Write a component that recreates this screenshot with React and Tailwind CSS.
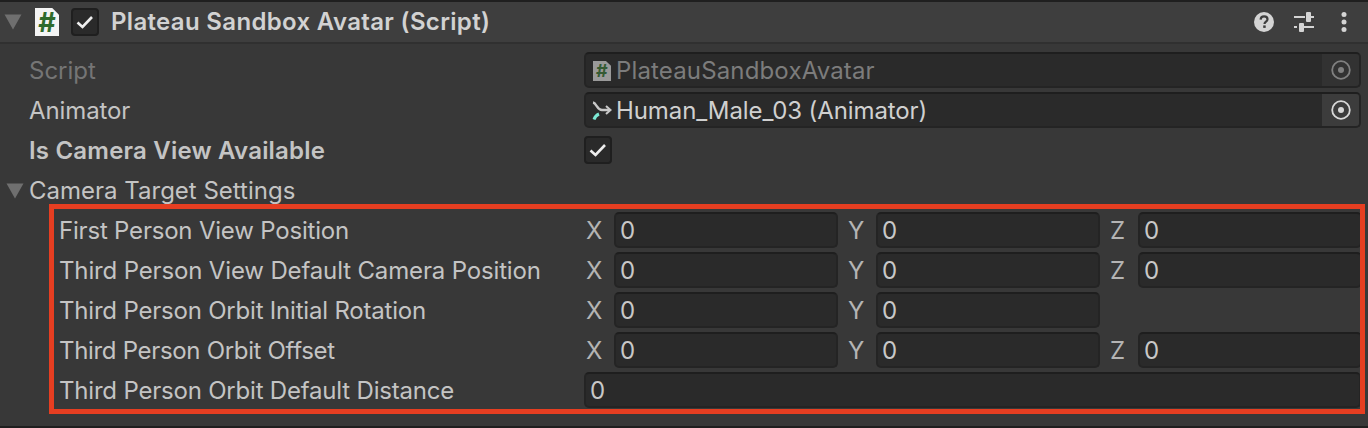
const Triangle = () => (
  <svg width="18" height="16" viewBox="0 0 18 16" className="block">
    <path d="M0.5 0.5H17.5L9 15.5Z" fill="#6f6f6f" />
  </svg>
);

const CheckBox = () => (
  <div className="flex h-[28px] w-[28px] items-center justify-center rounded-[4px] border-2 border-[#1f1f1f] bg-[#2a2a2a]">
    <svg width="20" height="16" viewBox="0 0 20 16" fill="none">
      <path d="M2.5 8.5L7.5 13L17 3" stroke="#eeeeee" strokeWidth="2.6" />
    </svg>
  </div>
);

const ScriptIcon = ({ className, hash }) => (
  <div className={`relative flex items-center justify-center ${className}`} style={{ clipPath: 'polygon(0 0, 72% 0, 100% 24%, 100% 100%, 0 100%)' }}>
    <span className={`font-['Inter',sans-serif] font-bold leading-none ${hash}`}>#</span>
  </div>
);

const Target = ({ disabled }) => (
  <div className={`flex h-full w-[37px] items-center justify-center rounded-r-[3px] ${disabled ? 'bg-[#323232]' : 'bg-[#3c3c3c]'}`}>
    <svg width="20" height="20" viewBox="0 0 20 20" fill="none">
      <circle cx="10" cy="10" r="8.8" stroke={disabled ? '#808080' : '#d8d8d8'} strokeWidth="1.8" />
      <circle cx="10" cy="10" r="3" fill={disabled ? '#808080' : '#d8d8d8'} />
    </svg>
  </div>
);

const Field = ({ className = '', children }) => (
  <div className={`mb-[2px] flex h-[36px] items-center rounded-[5px] border-2 border-[#242424] border-t-[#1e1e1e] bg-[#2a2a2a] ${className}`}>
    {children}
  </div>
);

const NumberField = ({ axis }) => (
  <div className="flex w-[254px] shrink-0 items-center">
    <span className="w-[30px] pl-[2px] text-[#b4b4b4]">{axis}</span>
    <Field className="w-[224px] pl-[4px] pt-[2px] text-[#c8c8c8]">0</Field>
  </div>
);

const Row = ({ label, indent = 'pl-[29px]', labelClass = 'text-[#c4c4c4]', arrow, children }) => (
  <div className="flex h-[40px] items-center">
    <div className={`relative flex w-[584px] shrink-0 items-center ${indent} ${labelClass}`}>
      {arrow && <span className="absolute left-[6px] top-[4px]"><Triangle /></span>}
      {label}
    </div>
    {children}
  </div>
);

const vectorRows = [
  ['First Person View Position', ['X', 'Y', 'Z'], 'tracking-[-0.2px] text-[#c4c4c4]'],
  ['Third Person View Default Camera Position', ['X', 'Y', 'Z'], 'tracking-[-0.15px] text-[#c4c4c4]'],
  ['Third Person Orbit Initial Rotation', ['X', 'Y'], 'tracking-[-0.2px] text-[#c4c4c4]'],
  ['Third Person Orbit Offset', ['X', 'Y', 'Z'], 'tracking-[-0.32px] text-[#c4c4c4]'],
];

export default function App() {
  return (
    <div className="relative flex h-[428px] w-[1368px] flex-col overflow-hidden bg-[#383838] font-['Inter',sans-serif] text-[24px] leading-none">
      <div className="h-[2px] shrink-0 bg-[#1f1f1f]" />

      {/* header */}
      <div className="flex h-[42px] shrink-0 items-center border-b-2 border-[#303030] bg-[#3e3e3e]">
        <span className="ml-[4px]"><Triangle /></span>
        <ScriptIcon className="ml-[13px] h-[28px] w-[24px] bg-[#f4f4f4]" hash="text-[27px] text-[#2f6b2c]" />
        <span className="ml-[12px]"><CheckBox /></span>
        <span className="ml-[12px] font-semibold tracking-[0.33px] text-[#d2d2d2]">Plateau Sandbox Avatar (Script)</span>
        <div className="ml-auto mr-[21px] flex items-center">
          <svg width="20" height="20" viewBox="0 0 20 20">
            <circle cx="10" cy="10" r="10" fill="#d4d4d4" />
            <path d="M6.6 7.6C6.7 5.5 8.1 4.3 10.1 4.3C12.1 4.3 13.5 5.5 13.5 7.2C13.5 9.6 10.5 9.6 10.5 12" fill="none" stroke="#3e3e3e" strokeWidth="2.2" />
            <rect x="9.2" y="13.4" width="2.5" height="2.5" fill="#3e3e3e" />
          </svg>
          <svg width="20" height="20" viewBox="0 0 20 20" fill="#d4d4d4" className="ml-[20px]">
            <rect x="0" y="4" width="11" height="2" />
            <rect x="12" y="0" width="5" height="10" rx="1" />
            <rect x="17" y="4" width="3" height="2" />
            <rect x="0" y="14" width="3" height="2" />
            <rect x="5" y="11" width="5" height="9" rx="1" />
            <rect x="10" y="14" width="10" height="2" />
          </svg>
          <svg width="6" height="20" viewBox="0 0 6 20" fill="#d4d4d4" className="ml-[27px]">
            <circle cx="3" cy="2.6" r="2.5" />
            <circle cx="3" cy="10" r="2.5" />
            <circle cx="3" cy="17.4" r="2.5" />
          </svg>
        </div>
      </div>

      <div className="h-[7px] shrink-0" />

      <Row label="Script" labelClass="text-[#757575]">
        <Field className="w-[777px] justify-between text-[#7c7c7c]">
          <span className="mt-[2px] flex items-center tracking-[0.15px]">
            <ScriptIcon className="ml-[7px] mr-[5px] h-[20px] w-[18px] bg-[#9a9a9a]" hash="text-[18px] text-[#345a33]" />
            PlateauSandboxAvatar
          </span>
          <Target disabled />
        </Field>
      </Row>

      <Row label="Animator" labelClass="tracking-[-0.1px] text-[#c4c4c4]">
        <Field className="w-[777px] justify-between text-[#d0d0d0]">
          <span className="mt-[2px] flex items-center tracking-[-0.1px]">
            <svg width="20" height="20" viewBox="0 0 20 20" fill="none" className="ml-[6px] mr-[4px]">
              <path d="M1 1.5C4.5 2 5 9 10 9H18" stroke="#c8c8c8" strokeWidth="2.4" />
              <path d="M14 5L18.5 9L14 13" stroke="#c8c8c8" strokeWidth="2" />
              <path d="M2 18.5C3 15.5 4.5 14 7 13" stroke="#7ce8d4" strokeWidth="3" />
            </svg>
            Human_Male_03 (Animator)
          </span>
          <Target />
        </Field>
      </Row>

      <Row label="Is Camera View Available" labelClass="font-semibold tracking-[0.2px] text-[#c4c4c4]">
        <div className="mb-[2px]"><CheckBox /></div>
      </Row>

      <Row label="Camera Target Settings" arrow />

      {vectorRows.map(([label, axes, labelClass]) => (
        <Row key={label} label={label} indent="pl-[59px]" labelClass={labelClass}>
          <div className="flex gap-[8px]">
            {axes.map((axis) => (
              <NumberField key={axis} axis={axis} />
            ))}
          </div>
        </Row>
      ))}

      <Row label="Third Person Orbit Default Distance" indent="pl-[59px]" labelClass="tracking-[-0.2px] text-[#c4c4c4]">
        <Field className="w-[777px] pl-[4px] pt-[2px] text-[#c8c8c8]">0</Field>
      </Row>

      <div className="mt-auto h-[2px] shrink-0 bg-[#1f1f1f]" />

      {/* red highlight drawn on top of the screenshot */}
      <div className="pointer-events-none absolute left-[49px] top-[204px] h-[210px] w-[1316px] border-[5px] border-[#e63e21]" />
    </div>
  );
}
